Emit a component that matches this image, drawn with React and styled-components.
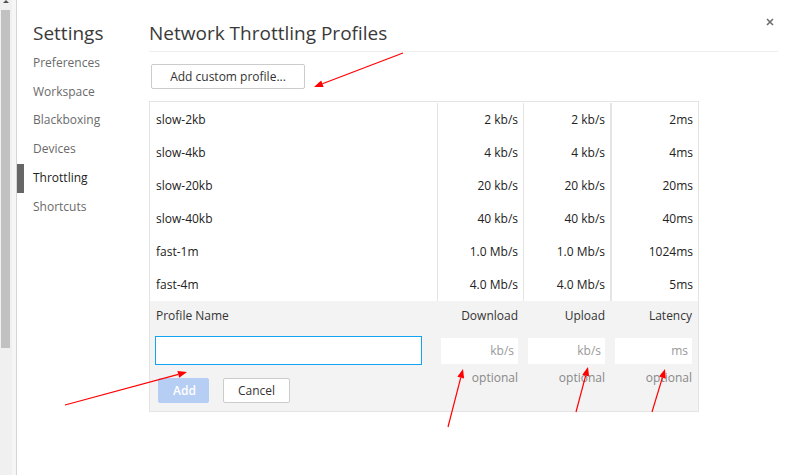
import React from 'react';
import styled, { createGlobalStyle } from 'styled-components';

const GlobalStyle = createGlobalStyle`
  html, body {
    margin: 0;
    padding: 0;
    background: #fff;
  }
  body {
    font-family: "Open Sans", "Noto Sans", sans-serif;
    color: #222;
  }
`;

const Page = styled.div`
  position: relative;
  display: flex;
  width: 786px;
  height: 475px;
  overflow: hidden;
  background: #fff;
`;

const Gutter = styled.div`
  width: 17px;
  display: flex;
  flex-shrink: 0;
`;

const Track = styled.div`
  width: 11px;
  background: #f0f0f0;
  display: flex;
  flex-direction: column;
`;

const TrackArrow = styled.div`
  height: 10px;
  display: flex;
  justify-content: center;
  align-items: flex-start;

  &::before {
    content: '';
    border-left: 3px solid transparent;
    border-right: 3px solid transparent;
    border-bottom: 3px solid #505050;
  }
`;

const Thumb = styled.div`
  height: 338px;
  margin: 0 1px;
  background: #c1c1c1;
`;

const GutterEdge = styled.div`
  flex: 1;
  border-left: 1px solid #f0f0f0;
  border-right: 1px solid #d6d6d6;
  background: #f6f6f6;
`;

const Sidebar = styled.nav`
  width: 132px;
  flex-shrink: 0;
  padding-top: 20px;
`;

const SideTitle = styled.h1`
  margin: 0 0 3px 16px;
  font-size: 19px;
  line-height: 26px;
  font-weight: 400;
  color: #3a3a3a;
`;

const SideItem = styled.div`
  position: relative;
  padding: 5px 0 5px 16px;
  line-height: 18.7px;
  font-size: 12px;
  color: ${(p) => (p.$active ? '#222' : '#6a6a6a')};

  &::before {
    content: '';
    display: ${(p) => (p.$active ? 'block' : 'none')};
    position: absolute;
    left: 0;
    top: 0;
    width: 7px;
    height: 29px;
    background: #666;
  }
`;

const Main = styled.main`
  flex: 1;
  padding-right: 8px;
  display: flex;
  flex-direction: column;
  align-items: flex-start;
`;

const Header = styled.h2`
  align-self: stretch;
  margin: 0;
  padding: 20px 0 5px;
  font-size: 19px;
  line-height: 26px;
  font-weight: 400;
  color: #3a3a3a;
  border-bottom: 1px solid #eee;
`;

const Close = styled.div`
  position: absolute;
  top: 9px;
  right: 12px;
  width: 8px;
  height: 8px;
  color: #6d6d6d;
`;

const Button = styled.button`
  font-family: inherit;
  font-size: 12px;
  height: 25px;
  padding: 0 ${(p) => p.$pad || 14}px;
  border-radius: 2px;
  border: 1px solid ${(p) => (p.$primary ? '#b6cdf4' : '#ccc')};
  background: ${(p) => (p.$primary ? '#b6cdf4' : '#fff')};
  color: ${(p) => (p.$primary ? '#fff' : '#333')};
  font-weight: ${(p) => (p.$primary ? 600 : 400)};
`;

const AddProfile = styled(Button)`
  margin: 12px 0 0 2px;
  width: 154px;
`;

const Table = styled.div`
  margin-top: 12px;
  width: 550px;
  box-sizing: border-box;
  border: 1px solid #e4e4e4;
  display: flex;
  flex-direction: column;
`;

const List = styled.div`
  padding-top: 1px;
  display: flex;
  flex-direction: column;
`;

const cols = '287px 86px 87px 88px';

const Row = styled.div`
  display: grid;
  grid-template-columns: ${cols};
  height: 33px;
  font-size: 12px;
`;

const Cell = styled.div`
  display: flex;
  align-items: center;
  justify-content: ${(p) => (p.$num ? 'flex-end' : 'flex-start')};
  padding: ${(p) => (p.$num ? '0 5px 0 0' : '0 0 0 6px')};
  border-left: ${(p) => p.$sep || 0}px solid #e4e4e4;
  color: #222;
`;

const Editor = styled.div`
  display: grid;
  grid-template-columns: ${cols};
  grid-template-rows: 35px 29px auto;
  background: #f3f3f3;
  padding-bottom: 8px;
  font-size: 12px;
`;

const Label = styled.div`
  padding: 6px ${(p) => (p.$num ? `${p.$right || 5}px` : '0')} 0 ${(p) => (p.$num ? '0' : '6px')};
  line-height: 18px;
  text-align: ${(p) => (p.$num ? 'right' : 'left')};
  color: #333;
`;

const NameInput = styled.div`
  margin-left: 5px;
  width: 267px;
  height: 29px;
  box-sizing: border-box;
  background: #fff;
  border: 1px solid #12a3f2;
`;

const NumInput = styled.div`
  justify-self: end;
  align-self: center;
  margin-right: ${(p) => p.$right || 5}px;
  width: 77px;
  height: 26px;
  box-sizing: border-box;
  padding-right: 4px;
  background: #fff;
  display: flex;
  align-items: center;
  justify-content: flex-end;
  color: #999;
`;

const Optional = styled.div`
  margin-top: 4px;
  padding-right: ${(p) => p.$right || 5}px;
  line-height: 18px;
  text-align: right;
  color: #888;
`;

const Actions = styled.div`
  display: flex;
  gap: 14px;
  margin: 13px 0 0 8px;
`;

const Annotations = styled.svg`
  position: absolute;
  left: 0;
  top: 0;
  pointer-events: none;
`;

const rows = [
  ['slow-2kb', '2 kb/s', '2 kb/s', '2ms'],
  ['slow-4kb', '4 kb/s', '4 kb/s', '4ms'],
  ['slow-20kb', '20 kb/s', '20 kb/s', '20ms'],
  ['slow-40kb', '40 kb/s', '40 kb/s', '40ms'],
  ['fast-1m', '1.0 Mb/s', '1.0 Mb/s', '1024ms'],
  ['fast-4m', '4.0 Mb/s', '4.0 Mb/s', '5ms'],
];

const arrows = [
  [403, 53, 314, 87],
  [65, 405, 187, 372],
  [448, 427, 463, 369],
  [576, 412, 588, 367],
  [652, 412, 665, 369],
];

function Arrow({ x1, y1, x2, y2 }) {
  const a = Math.atan2(y2 - y1, x2 - x1);
  const len = 9;
  const w = 3.5;
  const bx = x2 - len * Math.cos(a);
  const by = y2 - len * Math.sin(a);
  const px = -Math.sin(a) * w;
  const py = Math.cos(a) * w;
  return (
    <g>
      <line x1={x1} y1={y1} x2={bx} y2={by} stroke="#f00" strokeWidth="1.2" />
      <polygon points={`${x2},${y2} ${bx + px},${by + py} ${bx - px},${by - py}`} fill="#f00" />
    </g>
  );
}

export default function App() {
  const nav = ['Preferences', 'Workspace', 'Blackboxing', 'Devices', 'Throttling', 'Shortcuts'];
  return (
    <Page>
      <GlobalStyle />
      <Gutter>
        <Track>
          <TrackArrow />
          <Thumb />
        </Track>
        <GutterEdge />
      </Gutter>
      <Sidebar>
        <SideTitle>Settings</SideTitle>
        {nav.map((n) => (
          <SideItem key={n} $active={n === 'Throttling'}>{n}</SideItem>
        ))}
      </Sidebar>
      <Main>
        <Header>Network Throttling Profiles</Header>
        <AddProfile>Add custom profile...</AddProfile>
        <Table>
          <List>
            {rows.map((r) => (
              <Row key={r[0]}>
                <Cell>{r[0]}</Cell>
                <Cell $num $sep={1}>{r[1]}</Cell>
                <Cell $num $sep={1}>{r[2]}</Cell>
                <Cell $num $sep={2}>{r[3]}</Cell>
              </Row>
            ))}
          </List>
          <Editor>
            <Label>Profile Name</Label>
            <Label $num>Download</Label>
            <Label $num>Upload</Label>
            <Label $num $right={6}>Latency</Label>
            <NameInput />
            <NumInput>kb/s</NumInput>
            <NumInput>kb/s</NumInput>
            <NumInput $right={6}>ms</NumInput>
            <Actions>
              <Button $primary $pad={0} style={{ width: 51 }}>Add</Button>
              <Button style={{ width: 67 }}>Cancel</Button>
            </Actions>
            <Optional>optional</Optional>
            <Optional>optional</Optional>
            <Optional $right={6}>optional</Optional>
          </Editor>
        </Table>
      </Main>
      <Close>
        <svg width="8" height="8" viewBox="0 0 8 8">
          <path d="M1 1L7 7M7 1L1 7" stroke="currentColor" strokeWidth="1.6" />
        </svg>
      </Close>
      <Annotations width="786" height="475">
        {arrows.map(([x1, y1, x2, y2], i) => (
          <Arrow key={i} x1={x1} y1={y1} x2={x2} y2={y2} />
        ))}
      </Annotations>
    </Page>
  );
}
